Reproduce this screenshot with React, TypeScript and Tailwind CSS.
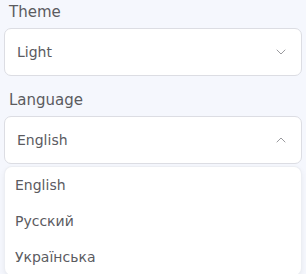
import { ChevronDown, ChevronUp } from 'lucide-react';

const LANGS = ['English', 'Русский', 'Українська'];

const Field = ({ label, value, open }: { label: string; value: string; open?: boolean }) => (
  <div className="flex flex-col">
    <div className="h-[24px] pl-[5px] text-[15px] leading-[24px] text-[#5b5b5f]">{label}</div>
    <div className="mt-[4px] h-[48px] rounded-[7px] border border-[#dcdde3] bg-white flex items-center justify-between pl-[12px] pr-[12px]">
      <span className="text-[14px] text-[#5b5b5f]">{value}</span>
      {open ? (
        <ChevronUp className="w-[16px] h-[16px] text-[#85858a]" strokeWidth={1.25} />
      ) : (
        <ChevronDown className="w-[16px] h-[16px] text-[#85858a]" strokeWidth={1.25} />
      )}
    </div>
  </div>
);

export default function App() {
  return (
    <div
      className="w-[306px] h-[274px] overflow-hidden bg-[#f5f7fd] px-[4px]"
      style={{ fontFamily: '"DejaVu Sans", "Noto Sans", sans-serif' }}
    >
      <Field label="Theme" value="Light" />
      <div className="mt-[12px]">
        <Field label="Language" value="English" open />
      </div>
      <div className="mt-[3px] mx-[1px] rounded-[7px] bg-white shadow-[0_0_0_1px_#eceef3,0_2px_6px_rgba(0,0,0,0.08)]">
        {LANGS.map((l) => (
          <div key={l} className="h-[36px] flex items-center pl-[10px] text-[14px] text-[#5b5b5f]">
            {l}
          </div>
        ))}
      </div>
    </div>
  );
}
